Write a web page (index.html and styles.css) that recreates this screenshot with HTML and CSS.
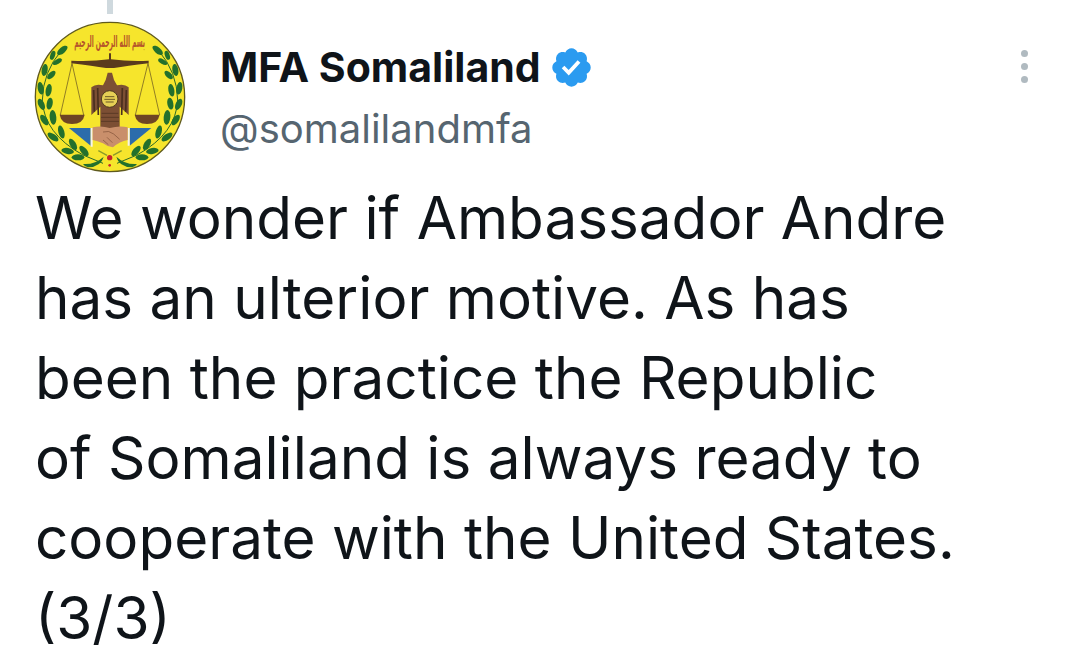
FILE: index.html
```html
<!DOCTYPE html>
<html lang="en">
<head>
  <meta charset="UTF-8" />
  <title>MFA Somaliland</title>
  <link rel="stylesheet" href="styles.css">
</head>
<body>
  <div class="tweet">
    <div class="head">
      <div class="avatar-col">
        <div class="thread-line"></div>
        <svg class="avatar" viewBox="40 60 462 462" width="154" height="154">
          <defs>
            <g id="branch" fill="#23702c">
              <path d="M125 152 Q70 215 68 300 Q72 400 190 465 L250 490" fill="none" stroke="#2c6a26" stroke-width="3"/>
              <ellipse rx="19" ry="9" transform="translate(128 151) rotate(-40)"/>
              <ellipse rx="14" ry="7" transform="translate(99 166) rotate(-70)"/>
              <ellipse rx="15" ry="7" transform="translate(113 185) rotate(-30)"/>
              <ellipse rx="18" ry="9" transform="translate(75 210) rotate(-80)"/>
              <ellipse rx="16" ry="8" transform="translate(95 225) rotate(-45)"/>
              <ellipse rx="19" ry="9" transform="translate(63 265) rotate(80)"/>
              <ellipse rx="19" ry="9" transform="translate(87 271) rotate(-80)"/>
              <ellipse rx="18" ry="9" transform="translate(65 313) rotate(65)"/>
              <ellipse rx="18" ry="9" transform="translate(90 311) rotate(-80)"/>
              <ellipse rx="18" ry="9" transform="translate(74 360) rotate(55)"/>
              <ellipse rx="22" ry="10" transform="translate(100 352) rotate(85)"/>
              <ellipse rx="19" ry="9" transform="translate(100 411) rotate(35)"/>
              <ellipse rx="20" ry="9" transform="translate(125 396) rotate(75)"/>
              <ellipse rx="19" ry="9" transform="translate(144 453) rotate(10)"/>
              <ellipse rx="19" ry="9" transform="translate(160 433) rotate(60)"/>
              <ellipse rx="19" ry="9" transform="translate(175 472) rotate(0)"/>
              <ellipse rx="19" ry="9" transform="translate(193 453) rotate(50)"/>
              <path d="M190 492 Q225 495 252 470 Q245 500 205 502 Q195 500 190 492Z"/>
            </g>
          </defs>
          <circle cx="271" cy="291" r="224" fill="#f6e52c" stroke="#5f5a1e" stroke-width="4"/>
          <use href="#branch"/>
          <use href="#branch" transform="translate(542 0) scale(-1 1)"/>
          <text class="emblem-script" transform="translate(270 140) scale(1 2.6)" text-anchor="middle">بسم الله الرحمن الرحيم</text>
          <!-- scales -->
          <g stroke="#5d4a20" stroke-width="2" fill="none">
            <path d="M157 190 L122 345 M157 190 L192 345 M385 190 L347 345 M385 190 L420 345"/>
          </g>
          <path d="M155 182 Q215 185 268 178 L268 160 L274 160 L274 178 Q330 185 387 182 L387 190 Q320 198 283 204 L259 204 Q220 198 155 190Z" fill="#5a3b1d"/>
          <path d="M120 344 H195 Q190 372 157 372 Q125 372 120 344Z" fill="#6e4524"/>
          <path d="M345 344 H420 Q415 372 382 372 Q350 372 345 344Z" fill="#6e4524"/>
          <!-- eagle -->
          <path d="M215 345 L215 262 Q228 250 250 256 L258 240 L264 218 H277 L283 240 L292 256 Q314 250 327 262 L327 345 L300 320 L300 385 H242 L242 320Z" fill="#7c4f34"/>
          <path d="M222 270 L224 335 M234 264 L236 345 M320 270 L318 335 M308 264 L306 345" stroke="#4a2f1e" stroke-width="5" fill="none"/>
          <path d="M246 340 H296 M244 352 H298 M244 364 H298" stroke="#5b3a26" stroke-width="3" fill="none"/>
          <circle cx="270" cy="297" r="25" fill="#e6cf55" stroke="#4e3a1d" stroke-width="3"/>
          <path d="M256 290 H284 M254 298 H286 M258 306 H282" stroke="#6c5a25" stroke-width="3"/>
          <!-- flag and handshake -->
          <path d="M148 384 H213 V437Z" fill="#2c6cab"/>
          <path d="M330 384 H395 L330 437Z" fill="#2c6cab"/>
          <path d="M213 384 H219 V440 H213Z M324 384 H330 V437 H324Z" fill="#f7f4ea"/>
          <path d="M219 382 Q245 376 270 384 Q300 376 324 382 V420 Q300 424 280 442 Q262 440 250 430 Q232 422 219 420Z" fill="#c98f6b"/>
          <path d="M250 396 Q268 390 282 402 L300 418 M262 412 L278 428 M250 420 L266 434" stroke="#7d4f35" stroke-width="2" fill="none"/>
          <!-- flower -->
          <path d="M236 452 L262 466 M306 452 L280 466" stroke="#8a9a2a" stroke-width="4" fill="none"/>
          <circle cx="270" cy="473" r="8" fill="#c6262a"/>
          <circle cx="270" cy="496" r="4" fill="#c6262a"/>
        </svg>
      </div>
      <div class="names">
        <div class="name-row">
          <span class="name">MFA Somaliland</span>
          <svg class="badge" viewBox="0 0 24 24" width="45" height="45"><path d="M22.25 12c0-1.43-.88-2.67-2.19-3.34.46-1.39.2-2.9-.81-3.91s-2.52-1.27-3.91-.81c-.66-1.31-1.91-2.19-3.34-2.19s-2.67.88-3.33 2.19c-1.4-.46-2.91-.2-3.92.81s-1.26 2.52-.8 3.91c-1.31.67-2.2 1.91-2.2 3.34s.89 2.67 2.2 3.34c-.46 1.39-.21 2.9.8 3.91s2.52 1.26 3.91.81c.67 1.31 1.91 2.19 3.34 2.19s2.68-.88 3.34-2.19c1.39.45 2.9.2 3.91-.81s1.27-2.52.81-3.91c1.31-.67 2.19-1.91 2.19-3.34zm-11.71 4.2L6.8 12.46l1.41-1.42 2.26 2.26 4.8-5.23 1.47 1.36-6.2 6.77z"/></svg>
        </div>
        <div class="handle">@somalilandmfa</div>
      </div>
      <div class="menu"><span></span><span></span><span></span></div>
    </div>
    <p class="text">We wonder if Ambassador Andre<br>has an ulterior motive. As has<br>been the practice the Republic<br>of Somaliland is always ready to<br>cooperate with the United States.<br>(3/3)</p>
  </div>
</body>
</html>
```

FILE: styles.css
```css
html, body {
  margin: 0;
  height: 100%;
  overflow: hidden;
  background: #fff;
}
body {
  font-family: Inter, "Liberation Sans", sans-serif;
  color: #0f1419;
}
.tweet {
  padding: 0 35px;
}
.head {
  display: flex;
  height: 178px;
}
.avatar-col {
  width: 187px;
  margin-left: -2px;
  flex-shrink: 0;
}
.thread-line {
  width: 6px;
  height: 14px;
  margin: 0 0 6px 74px;
  background: #cfd9de;
}
.avatar {
  display: block;
}
.names {
  padding-top: 42px;
}
.name-row {
  display: flex;
  align-items: center;
  height: 50px;
  gap: 8px;
}
.name {
  font-size: 41px;
  font-weight: 700;
  color: #0f1419;
}
.badge {
  fill: #2b9bf0;
}
.handle {
  margin-top: 17px;
  font-size: 40px;
  line-height: 40px;
  color: #566570;
}
.menu {
  margin-left: auto;
  margin-right: 17px;
  padding-top: 50px;
  display: flex;
  flex-direction: column;
  gap: 6px;
}
.menu span {
  width: 7px;
  height: 7px;
  border-radius: 50%;
  background: #b0bac0;
}
.text {
  margin: 0;
  font-size: 58.4px;
  line-height: 80px;
  white-space: nowrap;
}
.emblem-script {
  font-family: "DejaVu Sans", sans-serif;
  font-size: 18px;
  font-weight: 700;
  fill: #b5552a;
}
```
